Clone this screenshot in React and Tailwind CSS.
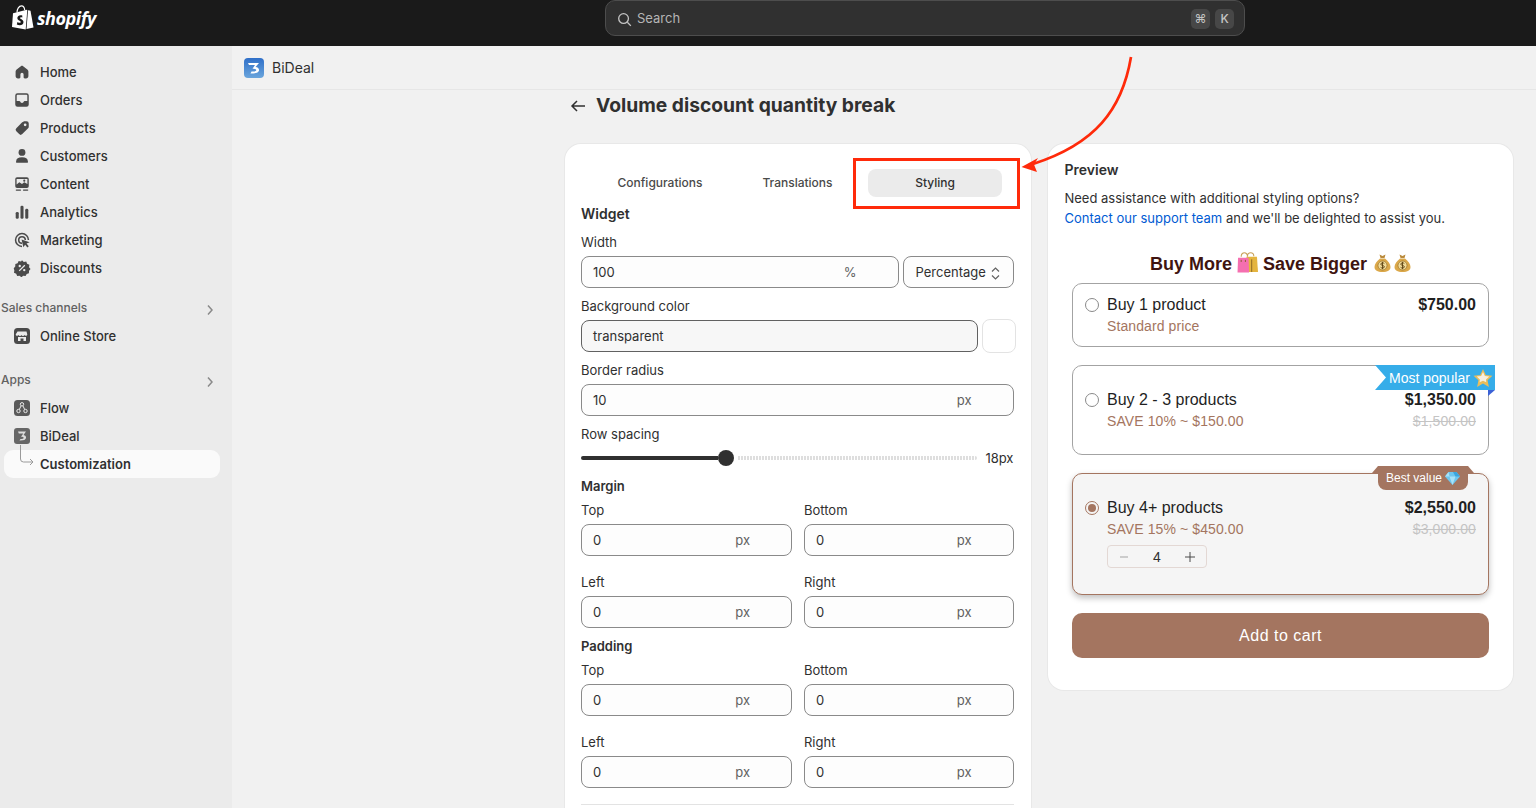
import React from "react";

const ui = "font-['Inter','Liberation_Sans',sans-serif]";
const shop = "font-['Liberation_Sans',Arial,sans-serif]";

const I = ({ children, c = "#4a4a4a", s = 18, v = 20 }) => (
  <svg width={s} height={s} viewBox={`0 0 ${v} ${v}`} fill={c}>{children}</svg>
);

const icons = {
  Home: <I s={16}><path d="M10 2.200c-.5 0-1 .2-1.400.5L3.300 7c-.8.6-1.300 1.500-1.300 2.500V15c0 1.700 1.300 3 3 3h1.500c.8 0 1.500-.7 1.500-1.500V13a2 2 0 1 1 4 0v3.500c0 .8.7 1.500 1.500 1.500H15c1.700 0 3-1.300 3-3V9.500c0-1-.5-1.900-1.300-2.500l-5.300-4.300c-.4-.3-.9-.5-1.400-.5Z" /></I>,
  Orders: <I><path fillRule="evenodd" d="M5 2.500h10A2.500 2.500 0 0 1 17.500 5v10a2.500 2.500 0 0 1-2.500 2.500H5A2.500 2.500 0 0 1 2.500 15V5A2.500 2.500 0 0 1 5 2.500Zm-.9 8.500H7c.5 0 .9.300 1 .8.200.8 1 1.400 2 1.400s1.800-.6 2-1.400c.1-.5.5-.8 1-.8h2.900V5c0-.5-.4-.9-.9-.9H5c-.5 0-.9.400-.9.900v6Z" /></I>,
  Products: <I><path fillRule="evenodd" d="M11.500 2.500h3.500A2.500 2.500 0 0 1 17.500 5v3.500c0 .7-.3 1.300-.7 1.800l-6.500 6.500a2.500 2.500 0 0 1-3.500 0l-3.100-3.100a2.500 2.500 0 0 1 0-3.500l6.500-6.500c.5-.4 1.100-.7 1.800-.7ZM13.500 8a1.500 1.500 0 1 0 0-3 1.500 1.500 0 0 0 0 3Z" /></I>,
  Customers: <I><circle cx="10" cy="6" r="3.800" /><path d="M3.500 17.500v-1.800c0-2.500 2.300-4.200 6.500-4.200s6.500 1.700 6.500 4.200v1.800Z" /></I>,
  Content: <I><path fillRule="evenodd" d="M4.500 2.500h11a2 2 0 0 1 2 2v8a2 2 0 0 1-2 2h-11a2 2 0 0 1-2-2v-8a2 2 0 0 1 2-2Zm-.5 2v6l3-2.500 3 2 2.500-2L16 10V4.500Z" /><circle cx="12.500" cy="6.300" r="1.200" /><rect x="3" y="16" width="6" height="1.500" rx=".7" /><rect x="11" y="16" width="6" height="1.500" rx=".7" /></I>,
  Analytics: <I><rect x="3" y="10" width="3.400" height="7.500" rx="1.500" /><rect x="8.300" y="3" width="3.400" height="14.500" rx="1.500" /><rect x="13.600" y="6.500" width="3.400" height="11" rx="1.500" /></I>,
  Marketing: <I><path fillRule="evenodd" d="M10 2a8 8 0 0 1 8 8h-1.700A6.300 6.300 0 1 0 10 16.300V18a8 8 0 0 1 0-16Zm0 3.500a4.500 4.500 0 0 1 4.500 4.500h-1.700A2.800 2.800 0 1 0 10 12.800v1.700a4.500 4.500 0 0 1 0-9Z" /><path d="m9.500 9.500 9 3-3.500 1.500 2.500 3-1.500 1.200-2.500-3L11.500 18Z" /></I>,
  Discounts: <I><path fillRule="evenodd" d="M10 1.500l2 1.700 2.700-.3 1 2.400 2.500 1.100-.4 2.700 1.700 1.900-1.700 2-.1 2.700-2.500.9-1.200 2.400-2.600-.4-2.100 1.700-2-1.700-2.700.3-1-2.400-2.500-1.100.4-2.700L.8 10.300l1.700-2 .1-2.700 2.500-.9 1.200-2.400 2.600.4Zm2.600 5-6.200 6.200 1 1 6.200-6.200ZM7.500 6.500a1.300 1.300 0 1 0 0 2.600 1.300 1.300 0 0 0 0-2.600Zm5 4.500a1.300 1.300 0 1 0 0 2.600 1.300 1.300 0 0 0 0-2.600Z" /></I>,
  "Online Store": <svg width="16" height="16" viewBox="0 0 16 16"><rect width="16" height="16" rx="3.500" fill="#4a4a4a" /><path d="M3.500 3.500h9l.8 3a1.500 1.500 0 0 1-2.800.6 1.700 1.700 0 0 1-3 0 1.700 1.700 0 0 1-3 0 1.500 1.500 0 0 1-2.800-.6Z" fill="#ebebeb" /><path d="M4 9h8v4H9.500v-2.500h-3V13H4Z" fill="#ebebeb" /></svg>,
  Flow: <svg width="16" height="16" viewBox="0 0 16 16"><rect width="16" height="16" rx="3.500" fill="#5a5a5a" /><g fill="none" stroke="#ebebeb" strokeWidth="1"><circle cx="8" cy="4.300" r="1.700" /><circle cx="4.500" cy="11" r="1.700" /><circle cx="11.500" cy="11" r="1.700" /><path d="M7 6 5.300 9.500M9 6l1.700 3.500" /></g></svg>,
  BiDeal: <svg width="16" height="16" viewBox="0 0 16 16"><rect width="16" height="16" rx="3" fill="#666" /><path d="M4 3.500h8l-2.500 3.500c1.800.3 2.800 1.500 2.500 3-.4 1.800-2.300 2.600-6.500 2.500l1-1.500c2 0 3-.3 3.100-1.100.1-.8-.9-1.100-2.600-1.100l2.300-3.300H4.800Z" fill="#ddd" /></svg>,
};

const NavRow = ({ name }) => (
  <div className="flex h-7 items-center">
    <span className="ml-[13px] mr-[9px] flex w-[18px] shrink-0 justify-center">{icons[name]}</span>
    <span className="pt-[2px] text-[13px] font-[450] text-[#303030]">{name}</span>
  </div>
);

const SectionHead = ({ name }) => (
  <div className="flex h-7 items-center justify-between pl-px pr-[17px]">
    <span className="text-xs font-medium text-[#616161]">{name}</span>
    <svg className="mt-1" width="10" height="12" viewBox="0 0 10 12" fill="none" stroke="#8a8a8a" strokeWidth="1.500"><path d="m3 1.500 4 4.500-4 4.500" /></svg>
  </div>
);

const Sidebar = () => (
  <aside className="flex w-[232px] shrink-0 flex-col bg-[#ebebeb] pt-3">
    {["Home", "Orders", "Products", "Customers", "Content", "Analytics", "Marketing", "Discounts"].map((n) => <NavRow key={n} name={n} />)}
    <div className="mt-3"><SectionHead name="Sales channels" /></div>
    <NavRow name="Online Store" />
    <div className="mt-[16px]"><SectionHead name="Apps" /></div>
    <NavRow name="Flow" />
    <NavRow name="BiDeal" />
    <div className="relative mx-1 flex h-7 w-[216px] items-center rounded-[9px] bg-[#fafafa] pl-9">
      <svg className="absolute left-[16px] top-[-5px]" width="18" height="24" viewBox="0 0 18 24" fill="none" stroke="#9a9a9a" strokeWidth="1"><path d="M.5 0v14a3 3 0 0 0 3 3H13m-3-3 3 3-3 3" /></svg>
      <span className="pt-[2px] text-[13px] font-semibold text-[#303030]">Customization</span>
    </div>
  </aside>
);

const TopBar = () => (
  <header className="flex h-[46px] shrink-0 bg-[#1a1a1a]">
    <div className="flex w-[605px] shrink-0 items-start gap-[3px] pl-3 pt-[6px]">
      <svg width="22" height="25" viewBox="0 0 22 25" className="-mt-px">
        <path d="M16 5.500 14.500 24 21.500 22.500 18.500 5.800 16.500 5.300Z" fill="#fff" />
        <path d="M14.800 4.700 1 8.200 0 22l13.700 2.500L15.300 5Z" fill="#fff" />
        <path d="M5 7.500C5 4 7 .8 9.500.800c2 0 3 2 3.200 4.300" fill="none" stroke="#fff" strokeWidth="1.200" />
        <path d="M10.300 10.500c-2.800-1-5.300.7-4.900 3 .4 2 3.500 2.300 3.500 3.600 0 1-1.700 1-3.400-.2l-.7 2.500c2.900 1.500 6.600.8 6.700-2.400.1-2.600-3.400-2.900-3.500-4 0-.7 1.100-.9 2.300-.4Z" fill="#1a1a1a" />
      </svg>
      <span className="text-[18px] font-bold italic leading-[25px] tracking-[-0.45px] text-white font-['Open_Sans',sans-serif]">shopify</span>
    </div>
    <div className="flex h-9 w-[640px] shrink-0 items-center rounded-[10px] border border-[#4d4d4d] bg-[#303030] pl-[11px] pr-[10px] pt-[2px]">
      <svg width="15" height="15" viewBox="0 0 16 16" fill="none" stroke="#c4c4c4" strokeWidth="1.400"><circle cx="7" cy="7" r="5.200" /><path d="m11 11 3.800 3.800" /></svg>
      <span className="ml-[5px] text-[13px] text-[#b5b5b5]">Search</span>
      <span className="ml-auto flex h-5 w-[19px] items-center justify-center rounded-[5px] bg-[#474747] text-xs text-[#c4c4c4]">⌘</span>
      <span className="ml-[5px] flex h-5 w-[19px] items-center justify-center rounded-[5px] bg-[#474747] text-xs font-medium text-[#c4c4c4]">K</span>
    </div>
  </header>
);

const Label = ({ children }) => <div className="h-5 text-[13px] leading-5 text-[#303030]">{children}</div>;
const Heading = ({ children, big }) => <div className={`h-5 ${big ? "text-sm" : "text-[13px]"} font-semibold leading-5 text-[#303030]`}>{children}</div>;

const Input = ({ value, unit }) => (
  <div className="flex h-8 items-center justify-between rounded-lg border border-[#8a8a8a] bg-[#fdfdfd] pl-[11px] pr-[41px] pt-[2px] text-[13px] text-[#303030]">
    <span>{value}</span>
    {unit && <span className="text-[#616161]">{unit}</span>}
  </div>
);

const Field = ({ label, children }) => (
  <div className="flex flex-col gap-1">
    <Label>{label}</Label>
    {children}
  </div>
);

const Quad = () => (
  <div className="grid grid-cols-[211px_1fr] gap-x-3 gap-y-4">
    {["Top", "Bottom", "Left", "Right"].map((l) => (
      <Field key={l} label={l}><Input value="0" unit="px" /></Field>
    ))}
  </div>
);

const Settings = () => (
  <section className="h-[700px] rounded-t-2xl bg-white pl-4 pr-[17px] pt-[25px] shadow-[0_0_0_1px_#e8e8e8]">
    <div className="flex gap-[3.500px] pl-3 text-xs font-medium">
      {["Configurations", "Translations", "Styling"].map((t) => (
        <div key={t} className={`flex h-7 w-[134px] items-center justify-center rounded-lg ${t === "Styling" ? "bg-[#ebebeb] text-[#303030]" : "text-[#4a4a4a]"}`}>{t}</div>
      ))}
    </div>
    <div className="mt-[7px] flex flex-col gap-2">
      <Heading big>Widget</Heading>
      <Field label="Width">
        <div className="flex gap-1">
          <div className="flex-1"><Input value="100" unit="%" /></div>
          <div className="flex h-8 w-[111px] items-center justify-between rounded-lg border border-[#8a8a8a] bg-[#fdfdfd] pl-3 pr-[13px] pt-[2px] text-[13px] text-[#303030]">
            Percentage
            <svg width="9" height="13" viewBox="0 0 9 13" fill="none" stroke="#616161" strokeWidth="1.200"><path d="m1 4.500 3.500-3.500 3.500 3.500M1 8.500l3.500 3.500 3.500-3.500" /></svg>
          </div>
        </div>
      </Field>
      <Field label="Background color">
        <div className="flex items-center gap-1">
          <div className="flex h-8 w-[397px] shrink-0 items-center rounded-lg border border-[#616161] bg-[#f7f7f7] pl-[11px] pt-[2px] text-[13px] text-[#303030]">transparent</div>
          <div className="-my-px h-[34px] w-[34px] shrink-0 rounded-lg border border-[#e3e3e3] bg-white" />
        </div>
      </Field>
      <Field label="Border radius"><Input value="10" unit="px" /></Field>
      <Label>Row spacing</Label>
      <div className="-mt-1 flex h-5 items-center">
        <div className="h-1 w-[137px] rounded-l-full bg-[#303030]" />
        <div className="h-4 w-4 rounded-full bg-[#303030]" />
        <div className="ml-1 h-1 w-[240px] rounded-r-full bg-[repeating-linear-gradient(90deg,#dedede_0,#dedede_2px,#ffffff_2px,#ffffff_3px)]" />
        <span className="ml-2 pt-[2px] text-[13px] text-[#303030]">18px</span>
      </div>
      <Heading>Margin</Heading>
      <div className="-mt-1"><Quad /></div>
      <Heading>Padding</Heading>
      <div className="-mt-1"><Quad /></div>
      <div className="mt-2 h-px bg-[#e3e3e3]" />
    </div>
  </section>
);

const Radio = ({ on }) => (
  <span className={`mr-2 mt-[2px] flex h-[14px] w-[14px] shrink-0 items-center justify-center rounded-full border ${on ? "border-[#a47560]" : "border-[#8a8a8a]"}`}>
    {on && <span className="h-2 w-2 rounded-full bg-[#a47560]" />}
  </span>
);

const Tier = ({ on, title, sub, price, old, cls, children }) => (
  <div className={`relative rounded-[10px] border px-3 ${cls} ${on ? "border-[#a47560] bg-[#f5f5f5] shadow-[0_3px_6px_rgba(0,0,0,0.25)]" : "border-[#a3a3a3] bg-white"}`}>
    <div className="flex items-start">
      <Radio on={on} />
      <div className="flex-1">
        <div className="flex justify-between text-base leading-[18px] text-[#1f1f1f]">
          <span>{title}</span>
          <span className="font-bold">{price}</span>
        </div>
        <div className="mt-[3px] flex justify-between text-sm leading-[18px] tracking-[0.1px] text-[#a47560]">
          <span>{sub}</span>
          {old && <span className="text-[#c4c4c4] line-through">{old}</span>}
        </div>
      </div>
    </div>
    {children}
  </div>
);

const Bag = () => (
  <svg className="inline-block align-[-3px]" width="21" height="21" viewBox="0 0 20 20">
    <path d="M4 4.500C4 2 5.500.8 7 .8s3 1.200 3 3.700M10 4C10 2 11.500.8 13 .8s3 1.200 3 3.200" fill="none" stroke="#c9a15a" strokeWidth="1" />
    <path d="M9 4.500h10l1 14.500H10Z" fill="#e4b43f" />
    <path d="M1 5.500h10l.5 14H.5Z" fill="#f56fb0" />
    <path d="M4 7.500v2M8 7.500v2M14 7v12" stroke="#7d5a20" strokeWidth=".8" />
  </svg>
);

const Money = ({ cls }) => (
  <svg className={`inline-block align-[-3px] ${cls}`} width="17" height="20" viewBox="0 0 17 20">
    <path d="M5.500 1.500 8.500 3l3-1.500-1 3.500h-4Z" fill="#b98a3c" />
    <path d="M6 5.500h5c3 2.500 5.500 5.500 5.500 8.500 0 3.500-3 5-8 5s-8-1.500-8-5c0-3 2.500-6 5.500-8.500Z" fill="#dba84a" />
    <circle cx="8.500" cy="12.500" r="4.500" fill="#f2dc9a" stroke="#8a6420" strokeWidth=".6" />
    <path d="M10.300 10.500c-.7-.9-3.500-1-3.500.7 0 1.600 3.600 1 3.600 2.600 0 1.600-2.900 1.500-3.800.5M8.500 8.800v7.400" fill="none" stroke="#5a4010" strokeWidth=".9" />
  </svg>
);

const Star = () => (
  <svg className="shrink-0" width="20" height="20" viewBox="0 0 18 18"><path d="m9 .8 2.500 5.500 6 .7-4.400 4 1.200 6L9 14l-5.300 3 1.200-6-4.400-4 6-.7Z" fill="#e9bd5a" /><path d="m9 3.500 1.700 3.600 3.900.5-2.900 2.700.2 2.600L9 11.500l-3 1.400.2-2.600-2.800-2.700 3.900-.5Z" fill="#f6efe0" /></svg>
);

const Gem = () => (
  <svg width="15" height="14" viewBox="0 0 15 14"><path d="M3.500 1h8L15 5.500 7.500 14 0 5.500Z" fill="#6ec6ee" /><path d="M4.500 5.500h6L7.500 14ZM3.500 1l1 4.500h-4.500Z" fill="#a8e2f8" /><path d="m8 1 2.500 4.500H15L11.500 1Z" fill="#3aa5de" /></svg>
);

const Preview = () => (
  <section className="h-[546px] rounded-2xl bg-white px-[17px] pt-4 shadow-[0_0_0_1px_#e8e8e8]">
    <Heading big>Preview</Heading>
    <p className="mt-2 text-[13px] leading-5 text-[#303030]">Need assistance with additional styling options?</p>
    <p className="text-[13px] leading-5 text-[#303030]"><span className="text-[#005bd3]">Contact our support team</span> and we'll be delighted to assist you.</p>
    <div className={`${shop} pl-[7.500px] pr-[7px]`}>
      <div className="mt-6 h-6 text-center text-lg font-bold leading-6 text-[#3f1410]">
        Buy More <Bag /> Save Bigger <Money cls="ml-[2px]" /><Money cls="ml-[3px]" />
      </div>
      <div className="mt-[7px] flex flex-col gap-[18px]">
        <Tier title="Buy 1 product" sub="Standard price" price="$750.00" cls="h-16 pt-3" />
        <Tier title="Buy 2 - 3 products" sub="SAVE 10% ~ $150.00" price="$1,350.00" old="$1,500.00" cls="h-[90px] pt-[25px]">
          <div className="absolute right-[-7px] top-[-1px] flex h-[25px] w-[120px] items-center gap-[3px] bg-[#36ade9] pl-[14px] text-sm text-white [clip-path:polygon(0_0,100%_0,100%_100%,0_100%,11px_50%)]">
            Most popular <Star />
          </div>
          <div className="absolute right-[-7px] top-[24px] h-[6px] w-[7px] bg-[#3b62d6] [clip-path:polygon(0_0,100%_0,0_100%)]" />
        </Tier>
        <Tier on title="Buy 4+ products" sub="SAVE 15% ~ $450.00" price="$2,550.00" old="$3,000.00" cls="h-[122px] pt-[25px]">
          <div className="absolute left-[299px] top-[-8px] h-[7px] w-[6px] bg-[#a47560] [clip-path:polygon(100%_0,100%_100%,0_100%)]" />
          <div className="absolute left-[395px] top-[-8px] h-[7px] w-[6px] bg-[#a47560] [clip-path:polygon(0_0,100%_100%,0_100%)]" />
          <div className="absolute left-[305px] top-[-8px] flex h-6 w-[90px] items-center gap-[3px] rounded-b-lg bg-[#a47560] pl-2 text-xs text-white">
            Best value <Gem />
          </div>
          <div className="ml-[22px] mt-[7px] flex h-[23px] w-[100px] items-center justify-between rounded border border-[#e3d8d4] px-[11px] text-sm text-[#303030]">
            <svg width="10" height="10" viewBox="0 0 10 10" stroke="#a3a3a3" strokeWidth="1"><path d="M1 5h8" /></svg>
            <span>4</span>
            <svg width="10" height="10" viewBox="0 0 10 10" stroke="#4a4a4a" strokeWidth="1"><path d="M0 5h10M5 0v10" /></svg>
          </div>
        </Tier>
        <div className="flex h-[45px] items-center justify-center rounded-[10px] bg-[#a47560] text-base tracking-[0.5px] text-white">Add to cart</div>
      </div>
    </div>
  </section>
);

const Annotation = () => (
  <>
    <div className="absolute left-[853px] top-[158px] h-[51px] w-[167px] border-[3px] border-[#ff2a0a]" />
    <svg className="absolute left-0 top-0" width="1536" height="808" fill="none">
      <path d="M1131 57C1122 110 1095 144 1033 164" stroke="#ff2a0a" strokeWidth="2.700" />
      <path d="M1021.500 167 1038 158 1034 164.500 1037 172Z" fill="#ff2a0a" />
    </svg>
  </>
);

export default function App() {
  return (
    <div className={`${ui} relative flex h-[808px] w-[1536px] flex-col overflow-hidden bg-[#f1f1f1]`}>
      <TopBar />
      <div className="flex min-h-0 flex-1">
        <Sidebar />
        <main className="min-w-0 flex-1">
          <div className="flex h-[44px] items-center gap-2 border-b border-[#e6e6e6] pl-3">
            <svg width="20" height="20" viewBox="0 0 20 20">
              <defs><linearGradient id="bd" x1="0" y1="0" x2="0" y2="1"><stop offset="0" stopColor="#2f6fc8" /><stop offset="1" stopColor="#6aa5dc" /></linearGradient></defs>
              <rect width="20" height="20" rx="4" fill="url(#bd)" />
              <path d="M4 5h11l-3.500 4c2.500.3 3.800 1.700 3.500 3.500-.4 2.200-3.400 3-8.500 3l1-2c3 0 4.600-.3 4.700-1.300.1-1-1.300-1.400-3.700-1.400L11 7H5Z" fill="#fff" />
            </svg>
            <span className="text-sm text-[#303030]">BiDeal</span>
          </div>
          <div className="pl-[333px] pr-[23px]">
            <div className="flex h-[31px] items-center pl-[5px]">
              <svg width="16" height="14" viewBox="0 0 16 14" fill="none" stroke="#303030" strokeWidth="1.500"><path d="M15 7H2M7 2 2 7l5 5" /></svg>
              <h1 className="ml-[10px] text-[19.250px] font-bold text-[#303030]">Volume discount quantity break</h1>
            </div>
            <div className="mt-[23px] grid grid-cols-2 items-start gap-[17px]">
              <Settings />
              <Preview />
            </div>
          </div>
        </main>
      </div>
      <Annotation />
    </div>
  );
}
